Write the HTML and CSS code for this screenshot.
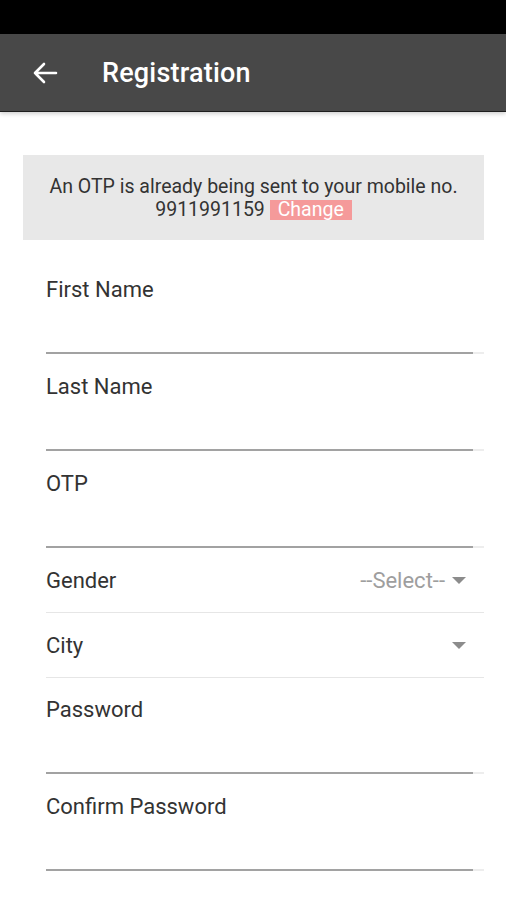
FILE: index.html
```html
<!DOCTYPE html>
<html lang="en">
<head>
    <meta charset="UTF-8">
    <meta name="viewport" content="width=device-width, initial-scale=1.0">
    <title>Registration</title>
    <link rel="stylesheet" href="styles.css">
</head>
<body>
    <div class="status-bar"></div>

    <header class="toolbar">
        <button class="back-btn" aria-label="Back">
            <svg width="26" height="26" viewBox="0 0 26 26">
                <path d="M24 13H3M12 4L3 13l9 9" fill="none" stroke="#fff" stroke-width="2.6" stroke-linecap="round" stroke-linejoin="round"/>
            </svg>
        </button>
        <h1 class="title">Registration</h1>
    </header>

    <main class="content">
        <div class="notice">
            <p>An OTP is already being sent to your mobile no.</p>
            <p>9911991159 <span class="change">Change</span></p>
        </div>

        <form class="form">
            <div class="field">
                <label>First Name</label>
                <div class="line"></div>
            </div>
            <div class="field">
                <label>Last Name</label>
                <div class="line"></div>
            </div>
            <div class="field">
                <label>OTP</label>
                <div class="line"></div>
            </div>
            <div class="select-row">
                <label>Gender</label>
                <span class="select-value">--Select--</span>
                <span class="caret"></span>
            </div>
            <div class="select-row">
                <label>City</label>
                <span class="select-value"></span>
                <span class="caret"></span>
            </div>
            <div class="field field-tight">
                <label>Password</label>
                <div class="line"></div>
            </div>
            <div class="field">
                <label>Confirm Password</label>
                <div class="line"></div>
            </div>
        </form>
    </main>
</body>
</html>
```

FILE: styles.css
```css
body {
    margin: 0;
    font-family: Roboto, "Noto Sans", Arial, sans-serif;
    background: #fff;
    color: #222;
    overflow: hidden;
}

.status-bar {
    height: 34px;
    background: #000;
}

.toolbar {
    display: flex;
    align-items: center;
    height: 77px;
    background: #484848;
    border-bottom: 1px solid #1e1e1e;
    box-shadow: 0 2px 4px rgba(0, 0, 0, 0.18);
    position: relative;
}

.back-btn {
    display: flex;
    align-items: center;
    justify-content: center;
    width: 26px;
    height: 26px;
    margin-left: 32px;
    padding: 0;
    border: none;
    background: none;
}

.title {
    margin: 0 0 0 44px;
    color: #fff;
    font-size: 27px;
    font-weight: 500;
    letter-spacing: 0.2px;
}

.content {
    padding: 43px 22px 0 23px;
}

.notice {
    display: flex;
    flex-direction: column;
    justify-content: center;
    height: 85px;
    background: #e8e8e8;
    text-align: center;
    font-size: 19.5px;
    color: #333;
}

.notice p {
    margin: 0;
    line-height: 23px;
}

.change {
    display: inline-block;
    padding: 0 8px;
    background: #f59a9a;
    color: #fff;
    line-height: 20px;
}

.form {
    padding-left: 23px;
    margin-top: 17px;
}

.field {
    display: flex;
    flex-direction: column;
    height: 97px;
}

.field label {
    margin-top: 20px;
    line-height: 26px;
    font-size: 22px;
    color: #333;
}

.field .line {
    margin-top: auto;
    height: 2px;
    background: linear-gradient(to right, #a2a2a2 calc(100% - 11px), #ededed 0);
}

.field-tight {
    height: 96px;
}

.field-tight label {
    margin-top: 19px;
}

.select-row {
    display: flex;
    align-items: center;
    height: 64px;
    border-bottom: 1px solid #e6e6e6;
    font-size: 22px;
    color: #333;
}

.select-row label {
    flex: 1;
}

.select-value {
    color: #9e9e9e;
    margin-right: 7px;
}

.caret {
    width: 0;
    height: 0;
    margin-right: 18px;
    border-left: 7px solid transparent;
    border-right: 7px solid transparent;
    border-top: 7px solid #8c8c8c;
}
```
